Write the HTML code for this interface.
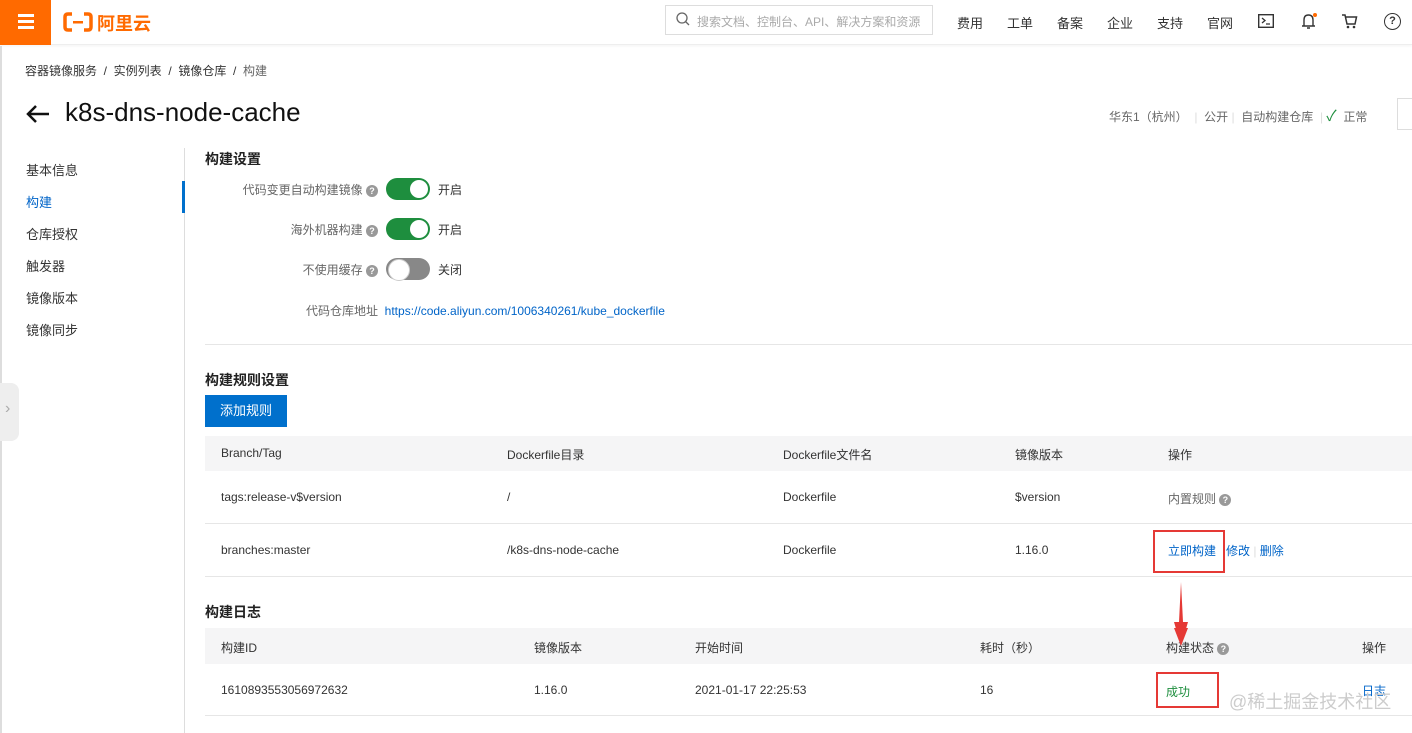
<!DOCTYPE html><html><head><meta charset="utf-8"><style>
*{margin:0;padding:0;box-sizing:border-box}
body{width:1412px;height:733px;overflow:hidden;background:#fff;font-family:"Liberation Sans","Noto Sans CJK SC",sans-serif;font-size:12px;color:#333;position:relative}
.a{position:absolute;white-space:nowrap}
.top{position:absolute;left:0;top:0;width:1412px;height:45px;border-bottom:1px solid #eee;box-shadow:0 1px 3px rgba(0,0,0,.05)}
.nav{font-size:13px;color:#333;top:13px}
.lnk{color:#0064c8}
.sw{position:absolute;width:44px;height:22px;border-radius:11px;background:#1e8e3e}
.sw::after{content:"";position:absolute;top:2px;width:18px;height:18px;border-radius:50%;background:#fff}
.on::after{right:2px}.off{background:#888}.off::after{left:2px;border:1px solid #ccc;top:1px;width:20px;height:20px}
.q{display:inline-block;width:12px;height:12px;border-radius:50%;background:#999;color:#fff;font-size:9px;line-height:12px;text-align:center;font-weight:bold}
.lab{color:#666;text-align:right;width:180px;left:198px}
.th{position:absolute;left:205px;width:1207px;background:#f5f5f6}
.hr{position:absolute;left:205px;width:1207px;height:1px;background:#e6e6e6}
.red{position:absolute;border:2px solid #e53935}
</style></head><body>
<div class="top">
<div class="a" style="left:0;top:0;width:51px;height:45px;background:#ff6a00"><div style="position:absolute;left:18px;top:14px;width:16px;height:3px;background:#fff;box-shadow:0 6px 0 #fff,0 12px 0 #fff"></div></div>
<svg class="a" style="left:63px;top:12px" width="30" height="20" viewBox="0 0 30 20"><path d="M9 2H5Q2 2 2 5V15Q2 18 5 18H9M21 2H25Q28 2 28 5V15Q28 18 25 18H21" fill="none" stroke="#ff6a00" stroke-width="3.5"/><rect x="10" y="9" width="10" height="2.5" fill="#ff6a00"/></svg>
<div class="a" style="left:97px;top:10px;font-size:18px;font-weight:bold;color:#ff6a00">阿里云</div>
<div class="a" style="left:665px;top:5px;width:268px;height:30px;border:1px solid #ddd;color:#aaa;padding:7px 0 0 31px;font-size:12px">搜索文档、控制台、API、解决方案和资源</div>
<svg class="a" style="left:676px;top:12px" width="14" height="14"><circle cx="6" cy="6" r="5" fill="none" stroke="#666" stroke-width="1.3"/><path d="M9.5 9.5L13 13" stroke="#666" stroke-width="1.3"/></svg>
<div class="a nav" style="left:957px">费用</div><div class="a nav" style="left:1007px">工单</div><div class="a nav" style="left:1057px">备案</div><div class="a nav" style="left:1107px">企业</div><div class="a nav" style="left:1157px">支持</div><div class="a nav" style="left:1207px">官网</div>
<svg class="a" style="left:1258px;top:14px" width="16" height="14"><rect x="0.7" y="0.7" width="14.6" height="12.6" fill="none" stroke="#333" stroke-width="1.4"/><path d="M4 4L7 6.5L4 9M8 10H12" fill="none" stroke="#333" stroke-width="1.3"/></svg>
<svg class="a" style="left:1300px;top:12px" width="18" height="18"><path d="M4 14V8Q4 3 8.5 3Q13 3 13 8V14ZM2 14H15M7 16H10" fill="none" stroke="#333" stroke-width="1.4"/><circle cx="15" cy="3" r="2" fill="#ff6a00"/></svg>
<svg class="a" style="left:1341px;top:13px" width="18" height="16"><path d="M1 2H4L6 11H14L15.5 4H5" fill="none" stroke="#333" stroke-width="1.5"/><circle cx="7" cy="14" r="1.3" fill="#333"/><circle cx="13" cy="14" r="1.3" fill="#333"/></svg>
<div class="a" style="left:1384px;top:13px;width:17px;height:17px;border:1.5px solid #333;border-radius:50%;font-size:11px;text-align:center;line-height:14px;font-weight:bold">?</div>
</div>
<div class="a" style="left:25px;top:62px;color:#333">容器镜像服务 &nbsp;/ &nbsp;实例列表 &nbsp;/ &nbsp;镜像仓库 &nbsp;/ &nbsp;<span style="color:#666">构建</span></div>
<svg class="a" style="left:25px;top:104px" width="26" height="20"><path d="M24 10H3M11 2L3 10L11 18" fill="none" stroke="#111" stroke-width="2.5"/></svg>
<div class="a" style="left:65px;top:97px;font-size:26px;color:#111">k8s-dns-node-cache</div>
<div class="a" style="left:1109px;top:105px;color:#666;font-size:12px;word-spacing:0">华东1（杭州） &nbsp;<span style="color:#ddd">|</span> &nbsp;公开 <span style="color:#ddd">|</span> &nbsp;自动构建仓库 &nbsp;<span style="color:#ddd">|</span> <span style="color:#1e8e3e;font-size:15px">✓</span> &nbsp;正常</div>
<div class="a" style="left:1397px;top:98px;width:20px;height:32px;border:1px solid #ddd"></div>
<div class="a" style="left:0;top:46px;width:2px;height:687px;background:#ddd"></div>
<div class="a" style="left:184px;top:148px;width:1px;height:585px;background:#ddd"></div>
<div class="a" style="left:182px;top:181px;width:3px;height:32px;background:#0070cc"></div>
<div class="a" style="left:26px;top:160px;font-size:13px">基本信息</div>
<div class="a lnk" style="left:26px;top:192px;font-size:13px">构建</div>
<div class="a" style="left:26px;top:224px;font-size:13px">仓库授权</div>
<div class="a" style="left:26px;top:256px;font-size:13px">触发器</div>
<div class="a" style="left:26px;top:288px;font-size:13px">镜像版本</div>
<div class="a" style="left:26px;top:320px;font-size:13px">镜像同步</div>
<div class="a" style="left:0;top:383px;width:19px;height:58px;background:#eee;border-radius:0 8px 8px 0;color:#aaa;font-size:16px;padding:17px 0 0 5px">›</div>
<div class="a" style="left:205px;top:149px;font-size:14px;font-weight:bold;color:#222">构建设置</div>
<div class="a lab" style="top:181px">代码变更自动构建镜像 <span class="q">?</span></div>
<div class="sw on" style="left:386px;top:178px"></div><div class="a" style="left:438px;top:181px">开启</div>
<div class="a lab" style="top:221px">海外机器构建 <span class="q">?</span></div>
<div class="sw on" style="left:386px;top:218px"></div><div class="a" style="left:438px;top:221px">开启</div>
<div class="a lab" style="top:261px">不使用缓存 <span class="q">?</span></div>
<div class="sw off" style="left:386px;top:258px"></div><div class="a" style="left:438px;top:261px">关闭</div>
<div class="a" style="left:306px;top:302px;color:#666">代码仓库地址 &nbsp;<span class="lnk">https://code.aliyun.com/1006340261/kube_dockerfile</span></div>
<div class="hr" style="top:344px"></div>
<div class="a" style="left:205px;top:370px;font-size:14px;font-weight:bold;color:#222">构建规则设置</div>
<div class="a" style="left:205px;top:395px;width:82px;height:32px;background:#0070cc;color:#fff;text-align:center;line-height:32px;font-size:13px">添加规则</div>
<div class="th" style="top:436px;height:35px"></div>
<div class="a" style="left:221px;top:446px">Branch/Tag</div><div class="a" style="left:507px;top:446px">Dockerfile目录</div><div class="a" style="left:783px;top:446px">Dockerfile文件名</div><div class="a" style="left:1015px;top:446px">镜像版本</div><div class="a" style="left:1168px;top:446px">操作</div>
<div class="a" style="left:221px;top:490px">tags:release-v$version</div><div class="a" style="left:507px;top:490px">/</div><div class="a" style="left:783px;top:490px">Dockerfile</div><div class="a" style="left:1015px;top:490px">$version</div><div class="a" style="left:1168px;top:490px;color:#666">内置规则 <span class="q">?</span></div>
<div class="hr" style="top:523px"></div>
<div class="a" style="left:221px;top:543px">branches:master</div><div class="a" style="left:507px;top:543px">/k8s-dns-node-cache</div><div class="a" style="left:783px;top:543px">Dockerfile</div><div class="a" style="left:1015px;top:543px">1.16.0</div>
<div class="a lnk" style="left:1168px;top:542px">立即构建 &nbsp; 修改 <span style="color:#ddd">|</span> 删除</div>
<div class="hr" style="top:576px"></div>
<div class="red" style="left:1153px;top:530px;width:72px;height:43px"></div>
<svg class="a" style="left:1172px;top:582px" width="18" height="64"><path d="M9 0L11 40L16 40L9 64L2 40L7 40Z" fill="#e53935"/></svg>
<div class="a" style="left:205px;top:602px;font-size:14px;font-weight:bold;color:#222">构建日志</div>
<div class="th" style="top:628px;height:36px"></div>
<div class="a" style="left:221px;top:639px">构建ID</div><div class="a" style="left:534px;top:639px">镜像版本</div><div class="a" style="left:695px;top:639px">开始时间</div><div class="a" style="left:980px;top:639px">耗时（秒）</div><div class="a" style="left:1166px;top:639px">构建状态 <span class="q">?</span></div><div class="a" style="left:1362px;top:639px">操作</div>
<svg class="a" style="left:1172px;top:628px" width="18" height="18"><path d="M2 0L16 0L9 18Z" fill="#e53935"/></svg>
<div class="a" style="left:221px;top:683px">1610893553056972632</div><div class="a" style="left:534px;top:683px">1.16.0</div><div class="a" style="left:695px;top:683px">2021-01-17 22:25:53</div><div class="a" style="left:980px;top:683px">16</div>
<div class="a" style="left:1166px;top:683px;color:#1e8e3e">成功</div><div class="a lnk" style="left:1362px;top:682px">日志</div>
<div class="red" style="left:1156px;top:672px;width:63px;height:36px"></div>
<div class="a" style="left:1229px;top:688px;font-size:18px;color:#ccc">@稀土掘金技术社区</div>
<div class="hr" style="top:715px"></div>
</body></html>
